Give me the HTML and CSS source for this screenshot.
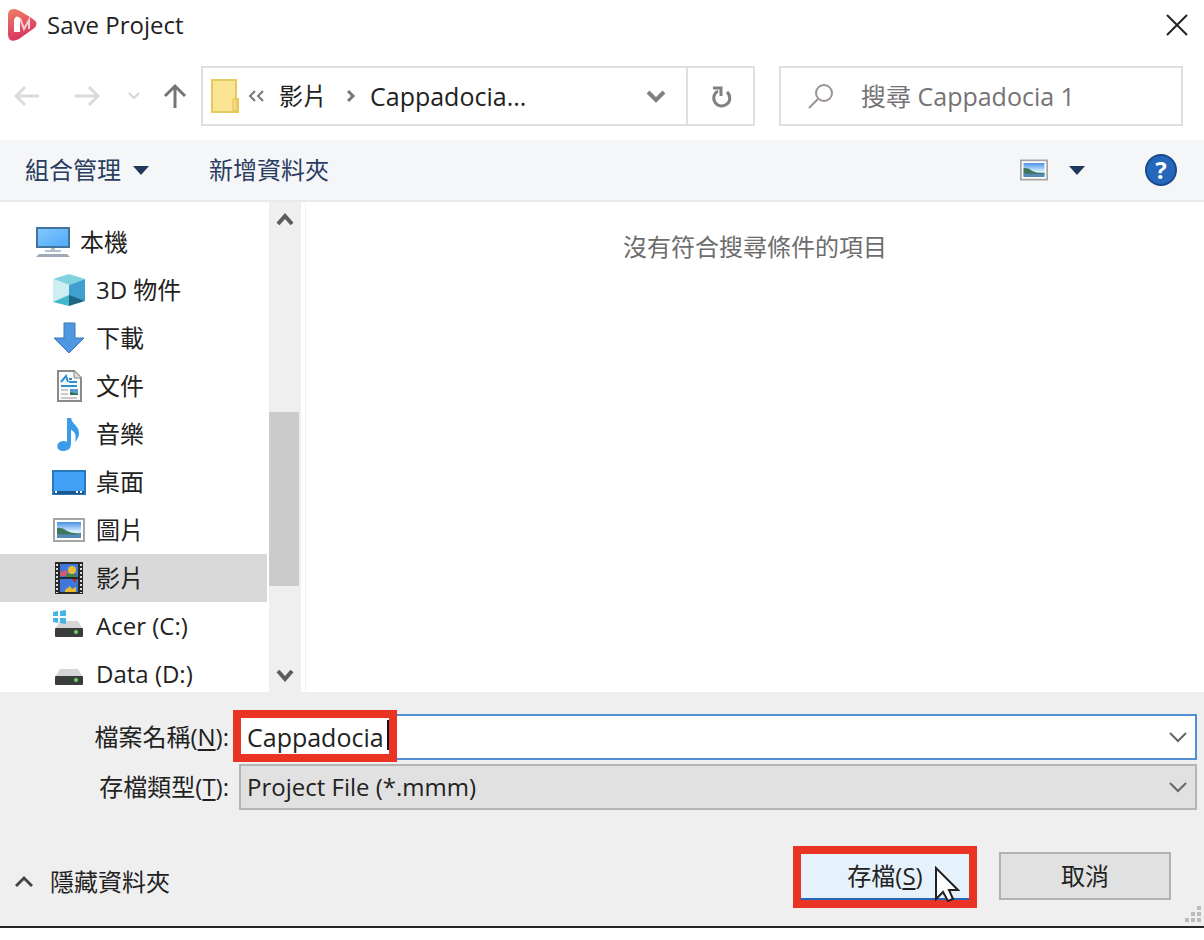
FILE: index.html
```
<!DOCTYPE html>
<html lang="zh-Hant">
<head>
    <meta charset="UTF-8">
    <meta name="viewport" content="width=device-width, initial-scale=1.0">
    <title>Save Project</title>
    <link rel="stylesheet" href="styles.css">
</head>
<body>
    <div class="dialog">
        <header class="title-bar">
            <svg class="app-logo" width="32" height="34" viewBox="0 0 32 34">
                <defs>
                    <linearGradient id="logoFill" x1="0" y1="0" x2="0.3" y2="1">
                        <stop offset="0" stop-color="#ee8066"/>
                        <stop offset="1" stop-color="#d93460"/>
                    </linearGradient>
                </defs>
                <path d="M1 7Q1 0 8 1Q11 1 26 11Q33 16 26 21L12 31Q2 36 1 27Z" fill="url(#logoFill)"/>
                <path d="M7 24V12q2-6 6-2v14z" fill="#fff"/>
                <path d="M13 10l4 11 5-9v9" fill="none" stroke="#f9cdd3" stroke-width="2"/>
            </svg>
            <h1>Save Project</h1>
            <button class="close" aria-label="Close">
                <svg width="22" height="22" viewBox="0 0 22 22"><path d="M1 1L21 21M21 1L1 21" stroke="#222" stroke-width="2"/></svg>
            </button>
        </header>

        <nav class="nav-row">
            <button class="nav-btn back" aria-label="Back">
                <svg width="26" height="22" viewBox="0 0 26 22"><path d="M25 11H2M11 2L2 11l9 9" stroke="#dadada" stroke-width="3"/></svg>
            </button>
            <button class="nav-btn forward" aria-label="Forward">
                <svg width="26" height="22" viewBox="0 0 26 22"><path d="M1 11H24M15 2l9 9-9 9" stroke="#dadada" stroke-width="3"/></svg>
            </button>
            <button class="nav-btn recent" aria-label="Recent">
                <svg width="12" height="8" viewBox="0 0 12 8"><path d="M1 1l5 5 5-5" stroke="#d6d6d6" stroke-width="2"/></svg>
            </button>
            <button class="nav-btn up" aria-label="Up">
                <svg width="24" height="26" viewBox="0 0 24 26"><path d="M12 25V3M2 13L12 3l10 10" stroke="#757575" stroke-width="3"/></svg>
            </button>
            <div class="address">
                <svg width="28" height="34" viewBox="0 0 28 34">
                    <path d="M1 1h24v19h2v13H1z" fill="#fbe491" stroke="#e8c95f" stroke-width="2"/>
                    <path d="M22 32V20h4v12z" fill="#f8dc7c" stroke="#e3c15a"/>
                </svg>
                <svg class="crumb-more" width="17" height="12" viewBox="0 0 17 12"><path d="M7 1L2 6l5 5M15 1l-5 5 5 5" stroke="#777" stroke-width="2"/></svg>
                <a href="#">影片</a>
                <svg class="crumb-sep" width="9" height="14" viewBox="0 0 9 14"><path d="M1 2l5 5-5 5" stroke="#777" stroke-width="3"/></svg>
                <a href="#" class="latin">Cappadocia...</a>
                <button class="address-open" aria-label="Open list">
                    <svg width="20" height="14" viewBox="0 0 20 14"><path d="M2 3l8 8 8-8" stroke="#808080" stroke-width="4"/></svg>
                </button>
                <button class="refresh" aria-label="Refresh">
                    <svg width="22" height="24" viewBox="0 0 22 24">
                        <path d="M17 8A8 8 0 1 1 8 7" stroke="#808080" stroke-width="3"/>
                        <path d="M3 4H11V12" stroke="#808080" stroke-width="3"/>
                    </svg>
                </button>
            </div>
            <div class="search">
                <svg width="26" height="26" viewBox="0 0 26 26"><circle cx="16" cy="10" r="8" stroke="#9a9296" stroke-width="2"/><path d="M10 16L1 25" stroke="#9a9296" stroke-width="2"/></svg>
                <input type="text" class="latin" placeholder="搜尋 Cappadocia 1" aria-label="搜尋">
            </div>
        </nav>

        <div class="toolbar">
            <button>組合管理 <svg width="16" height="9" viewBox="0 0 16 9"><path d="M0 0h16L8 9z" fill="#20365c"/></svg></button>
            <button>新增資料夾</button>
            <button class="view" aria-label="View">
                <svg width="28" height="22" viewBox="0 0 32 24"><use href="#picture"/></svg>
                <svg width="16" height="9" viewBox="0 0 16 9"><path d="M0 0h16L8 9z" fill="#20365c"/></svg>
            </button>
            <button class="help" aria-label="Help">?</button>
        </div>

        <main>
            <ul class="tree">
                <li class="root">
                    <svg width="34" height="32" viewBox="0 0 34 32">
                        <defs><linearGradient id="screen" x1="0" y1="0" x2="1" y2="1"><stop offset="0" stop-color="#83c8fc"/><stop offset="1" stop-color="#4eaaf8"/></linearGradient></defs>
                        <rect x="1" y="2" width="32" height="19" fill="url(#screen)" stroke="#43749d" stroke-width="2"/>
                        <path d="M15 22h4v2h6v2H9v-2h6z" fill="#b4becb"/>
                        <path d="M3 28h28l3 3H0z" fill="#9fa9ba"/>
                    </svg>
                    <a href="#">本機</a>
                </li>
                <li>
                    <svg width="34" height="34" viewBox="0 0 34 34">
                        <path d="M1 6L17 1l16 5-16 6z" fill="#7ed3de"/>
                        <path d="M1 6l16 6v14L1 29z" fill="#cdeff1"/>
                        <path d="M33 6l-16 6v12l16 4z" fill="#3f9fce"/>
                        <path d="M1 29l16-7v11z" fill="#42b8c8"/>
                        <path d="M33 28l-16-6v11z" fill="#1d6886"/>
                    </svg>
                    <a href="#">3D 物件</a>
                </li>
                <li>
                    <svg width="34" height="34" viewBox="0 0 34 34"><path d="M12 2h11v15h9L17 32 2 17h10z" fill="#4f97e1" stroke="#3b78b9"/></svg>
                    <a href="#">下載</a>
                </li>
                <li>
                    <svg width="34" height="34" viewBox="0 0 34 34">
                        <path d="M6 2h16l7 7v23H6z" fill="#fbfbfb" stroke="#8a8a8a" stroke-width="2"/>
                        <path d="M22 2v7h7" fill="#ddd" stroke="#8a8a8a"/>
                        <path d="M9 13l5-6 2 6M17 10h3M17 13h8M9 17h16" fill="none" stroke="#2e8fd0" stroke-width="2"/>
                        <path d="M9 21h7M9 25h7M9 29h16" stroke="#999"/>
                        <path d="M18 20h8v6h-8z" fill="#579ad0"/><path d="M18 23l8 2v1h-8z" fill="#31704c"/>
                    </svg>
                    <a href="#">文件</a>
                </li>
                <li>
                    <svg width="34" height="34" viewBox="0 0 34 34"><path d="M15 1h4c1 6 8 8 8 15 0 4-2 7-4 9 2-8-1-11-4-12v14c0 5-4 7-8 7-7 0-8-9 0-10 2 0 3 0 4 1z" fill="#3b9bea"/></svg>
                    <a href="#">音樂</a>
                </li>
                <li>
                    <svg width="34" height="34" viewBox="0 0 34 34">
                        <rect x="1" y="6" width="32" height="23" fill="#41a1f6" stroke="#2779bd" stroke-width="2"/>
                        <path d="M2 26h30v3H2z" fill="#1c568b"/><path d="M3 27h2M24 27h2M28 27h2" stroke="#fff" stroke-width="2"/>
                    </svg>
                    <a href="#">桌面</a>
                </li>
                <li>
                    <svg width="34" height="24" viewBox="0 0 32 24">
                        <defs>
                            <linearGradient id="sky" x1="0" y1="0" x2="0" y2="1"><stop offset="0" stop-color="#4a91e6"/><stop offset="0.6" stop-color="#d8efff"/></linearGradient>
                        </defs>
                        <g id="picture">
                            <rect x="1" y="1" width="30" height="22" fill="#fff" stroke="#a5a5a5" stroke-width="2"/>
                            <rect x="4" y="4" width="24" height="16" fill="url(#sky)"/>
                            <path d="M4 10q5-1 10 3 6 3 14 2v3H4z" fill="#3f765b"/>
                            <path d="M4 16q12 1 24 0v4H4z" fill="#5689b9"/>
                        </g>
                    </svg>
                    <a href="#">圖片</a>
                </li>
                <li class="selected">
                    <svg width="34" height="34" viewBox="0 0 34 34">
                        <path d="M3 1h28v32H3z" fill="#292929"/>
                        <path d="M5 3v29M29 3v29" stroke="#ddd" stroke-width="2" stroke-dasharray="2 2"/>
                        <path d="M8 3h18v13H8zM8 18h18v13H8z" fill="#3f78dc"/>
                        <path d="M8 11l7-2 1 6H8z" fill="#d35b70"/><circle cx="20" cy="9" r="4" fill="#e9bf32"/>
                        <path d="M14 13h10v3H14z" fill="#448343"/><path d="M20 18h5l-2 4z" fill="#a83131"/>
                        <path d="M13 29l5-4 2 3 4-2v5H13z" fill="#e8b82d"/>
                    </svg>
                    <a href="#">影片</a>
                </li>
                <li>
                    <svg width="34" height="34" viewBox="0 0 34 34">
                        <use href="#drive"/>
                        <path d="M1 3l5-1v5H1zM8 2l6-1v6H8zM1 9h5v5l-5-1zM8 9h6v6l-6-1z" fill="#43b5e8"/>
                    </svg>
                    <a href="#">Acer (C:)</a>
                </li>
                <li>
                    <svg width="34" height="34" viewBox="0 0 34 34">
                        <g id="drive">
                            <path d="M8 12h18l5 8H3z" fill="#d3d5d7"/>
                            <rect x="3" y="19" width="28" height="9" rx="1" fill="#393c3e"/>
                            <circle cx="24" cy="23" r="2" fill="#66dd4f"/>
                        </g>
                    </svg>
                    <a href="#">Data (D:)</a>
                </li>
            </ul>
            <div class="scrollbar">
                <button aria-label="Scroll up"><svg width="18" height="14" viewBox="0 0 18 14"><path d="M2 11l7-8 7 8" stroke="#5c5c5c" stroke-width="4"/></svg></button>
                <div class="thumb"></div>
                <button class="down" aria-label="Scroll down"><svg width="18" height="14" viewBox="0 0 18 14"><path d="M2 3l7 8 7-8" stroke="#5c5c5c" stroke-width="4"/></svg></button>
            </div>
            <section class="files">
                <p>沒有符合搜尋條件的項目</p>
            </section>
        </main>

        <form class="save-form">
            <label for="filename">檔案名稱(<u>N</u>):</label>
            <div class="field name-field">
                <input type="text" id="filename" class="latin" value="Cappadocia">
                <svg class="chevron" width="18" height="12" viewBox="0 0 18 12"><path d="M1 2l8 8 8-8" stroke="#666" stroke-width="2"/></svg>
                <span class="mark mark-name"></span>
            </div>
            <label for="filetype">存檔類型(<u>T</u>):</label>
            <div class="field type-field">
                <select id="filetype">
                    <option>Project File (*.mmm)</option>
                </select>
                <svg class="chevron" width="18" height="12" viewBox="0 0 18 12"><path d="M1 2l8 8 8-8" stroke="#666" stroke-width="2"/></svg>
            </div>
        </form>

        <footer>
            <button class="hide-folders">
                <svg width="18" height="14" viewBox="0 0 18 14"><path d="M1 11l8-8 8 8" stroke="#444" stroke-width="3"/></svg>
                隱藏資料夾
            </button>
            <div class="save-wrap">
                <button class="action save">存檔(<u>S</u>)</button>
                <span class="mark mark-save"></span>
                <svg class="pointer" width="26" height="36" viewBox="0 0 26 36"><path d="M2 2v31l7-7 5 9 5-2-4-9h9z" fill="#fff" stroke="#222" stroke-width="2"/></svg>
            </div>
            <button class="action cancel">取消</button>
            <svg class="grip" width="16" height="16" viewBox="0 0 16 16"><path d="M12 0h4v4h-4zM6 6h4v4H6zM12 6h4v4h-4zM0 12h4v4H0zM6 12h4v4H6zM12 12h4v4h-4z" fill="#bcbcbc"/></svg>
        </footer>
    </div>
</body>
</html>
```
FILE: styles.css
```
* {
    box-sizing: border-box;
}

body {
    margin: 0;
    background-color: #fff;
    color: #222;
    font-family: "Open Sans", "Noto Sans CJK TC", sans-serif;
    font-size: 24px;
    line-height: 32px;
}

button, input, select {
    font: inherit;
    color: inherit;
    padding: 0;
    border: none;
    background: none;
    outline: none;
}

a {
    color: inherit;
    text-decoration: none;
}

svg {
    fill: none;
    flex: none;
}

.latin {
    font-size: 25px;
}

.dialog {
    display: flex;
    flex-direction: column;
    height: calc(100vh - 12px);
    min-height: 640px;
    border-bottom: 2px solid #26262a;
}

.title-bar {
    display: flex;
    align-items: center;
    height: 50px;
    padding: 0 16px 0 7px;
}

.title-bar h1 {
    margin: 0 auto 0 8px;
    font-size: 24px;
    font-weight: normal;
}

.close {
    display: flex;
}

.nav-row {
    display: flex;
    align-items: center;
    height: 90px;
    padding: 2px 21px 0 14px;
}

.nav-btn {
    display: flex;
}

.forward {
    margin-left: 34px;
}

.recent {
    margin-left: 28px;
}

.up {
    margin: 0 14px 0 23px;
}

.address {
    flex: 542;
    display: flex;
    align-items: center;
    height: 60px;
    padding-left: 8px;
    border: 2px solid #dfdfdf;
}

.crumb-more {
    margin: 0 14px 0 9px;
}

.crumb-sep {
    margin: 0 14px 0 20px;
}

.address-open {
    display: flex;
    margin-left: auto;
    padding-right: 20px;
}

.refresh {
    display: flex;
    align-items: center;
    justify-content: center;
    width: 67px;
    height: 56px;
    border-left: 2px solid #dfdfdf;
}

.search {
    flex: 373;
    display: flex;
    align-items: center;
    gap: 27px;
    min-width: 0;
    height: 60px;
    margin-left: 24px;
    padding-left: 27px;
    border: 2px solid #dfdfdf;
}

.search input {
    flex: 1;
    min-width: 0;
}

.search input::placeholder {
    color: #767276;
    opacity: 1;
}

.toolbar {
    display: flex;
    align-items: center;
    gap: 60px;
    height: 62px;
    padding: 0 27px 0 25px;
    background-color: #f4f6f8;
    border-bottom: 2px solid #e8e9eb;
    color: #2b3d60;
}

.toolbar button {
    display: flex;
    align-items: center;
    gap: 12px;
}

.toolbar .view {
    gap: 21px;
    margin-left: auto;
}

.toolbar .help {
    justify-content: center;
    width: 32px;
    height: 32px;
    border: 2px solid #174b8c;
    border-radius: 50%;
    background-color: #2567bd;
    color: #fff;
    font-weight: bold;
}

main {
    flex: 1;
    display: flex;
    min-height: 0;
}

.tree {
    width: 267px;
    margin: 0;
    padding: 16px 0 0;
    list-style: none;
    overflow: hidden;
}

.tree li {
    display: flex;
    align-items: center;
    gap: 10px;
    height: 48px;
    padding-left: 52px;
}

.tree .root {
    padding-left: 36px;
}

.tree .selected {
    background-color: #d9d9d9;
}

.scrollbar {
    display: grid;
    grid-template-rows: 36px 174fr 174fr 72fr 34px;
    width: 32px;
    margin-left: 2px;
    background-color: #efefef;
}

.scrollbar button {
    display: flex;
    align-items: center;
    justify-content: center;
}

.scrollbar .thumb {
    grid-row: 3;
    width: 30px;
    background-color: #cbcbcb;
}

.scrollbar .down {
    grid-row: 5;
}

.files {
    flex: 1;
    margin-left: 4px;
    border-left: 1px solid #f2f2f2;
    text-align: center;
    color: #6d6d6d;
}

.files p {
    margin: 29px 0 0;
}

.save-form {
    display: grid;
    grid-template-columns: 229px 1fr;
    column-gap: 10px;
    row-gap: 4px;
    align-items: center;
    padding: 22px 7px 0 0;
    background-color: #efefef;
}

.save-form label {
    text-align: right;
}

u {
    text-underline-offset: 3px;
}

.field {
    position: relative;
    display: flex;
    align-items: center;
    height: 46px;
    padding: 0 8px 0 6px;
}

.name-field {
    background-color: #fff;
    border: 2px solid #4f90d5;
}

.type-field {
    background-color: #e1e1e1;
    border: 2px solid #b5b5b5;
}

.field input, .field select {
    flex: 1;
    min-width: 0;
    appearance: none;
}

.mark {
    position: absolute;
    border: 8px solid #e93323;
    pointer-events: none;
}

/* the text cursor sits on the right inner edge */
.mark-name {
    top: -6px;
    left: -8px;
    width: 164px;
    height: 52px;
}

.mark-name::after {
    content: "";
    position: absolute;
    top: 2px;
    right: 0;
    width: 2px;
    height: 30px;
    background-color: #111;
}

footer {
    position: relative;
    display: flex;
    align-items: flex-start;
    padding: 42px 33px 26px 15px;
    background-color: #efefef;
}

.hide-folders {
    display: flex;
    align-items: center;
    gap: 17px;
    margin: 14px auto 0 0;
}

.save-wrap {
    position: relative;
    margin-right: 28px;
}

.action {
    display: block;
    width: 172px;
    height: 48px;
    border: 2px solid #b1b1b1;
    background-color: #e1e1e1;
}

.save {
    border-color: #2467bd;
    background-color: #e5f1fb;
}

.mark-save {
    inset: -6px -6px -8px;
}

.pointer {
    position: absolute;
    top: 14px;
    left: 135px;
}

.grip {
    position: absolute;
    right: 3px;
    bottom: 4px;
}
```
